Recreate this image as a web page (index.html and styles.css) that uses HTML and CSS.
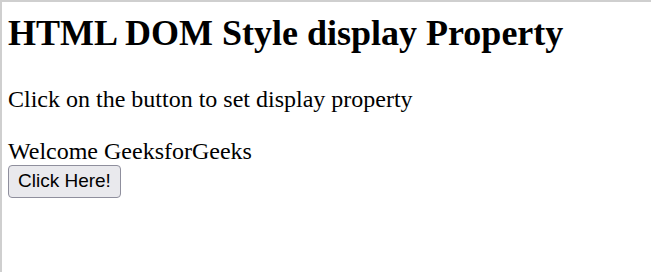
FILE: index.html
```html
<!DOCTYPE html>
<html>
<head>
<meta charset="utf-8">
<title>HTML DOM Style display Property</title>
<link rel="stylesheet" href="styles.css">
</head>
<body>
<div class="frame">
  <h1 class="title">HTML DOM Style display Property</h1>
  <p class="intro">Click on the button to set display property</p>
  <div class="welcome">Welcome GeeksforGeeks</div>
  <button class="btn" type="button">Click Here!</button>
</div>
</body>
</html>
```

FILE: styles.css
```css
html, body {
  margin: 0;
  padding: 0;
  background: #fff;
}
.frame {
  box-sizing: border-box;
  width: 651px;
  height: 272px;
  border-top: 2px solid #cfcfcf;
  border-left: 2px solid #cfcfcf;
  padding: 0 6px;
  font-family: "Liberation Serif", "Times New Roman", serif;
  color: #000;
  overflow: hidden;
}
.title {
  font-size: 36px;
  font-weight: bold;
  margin: 11px 0 0;
  line-height: 41px;
}
.intro {
  font-size: 24px;
  margin: 31px 0 0;
  line-height: 28px;
}
.welcome {
  font-size: 24px;
  line-height: 28px;
  margin-top: 24px;
}
.btn {
  font-family: "Liberation Sans", Arial, sans-serif;
  font-size: 19px;
  line-height: 22px;
  color: #000;
  background: #e9e9ed;
  border: 1px solid #8f8f9d;
  border-radius: 4px;
  padding: 4px 9px 5px;
  margin: 0;
}
```
